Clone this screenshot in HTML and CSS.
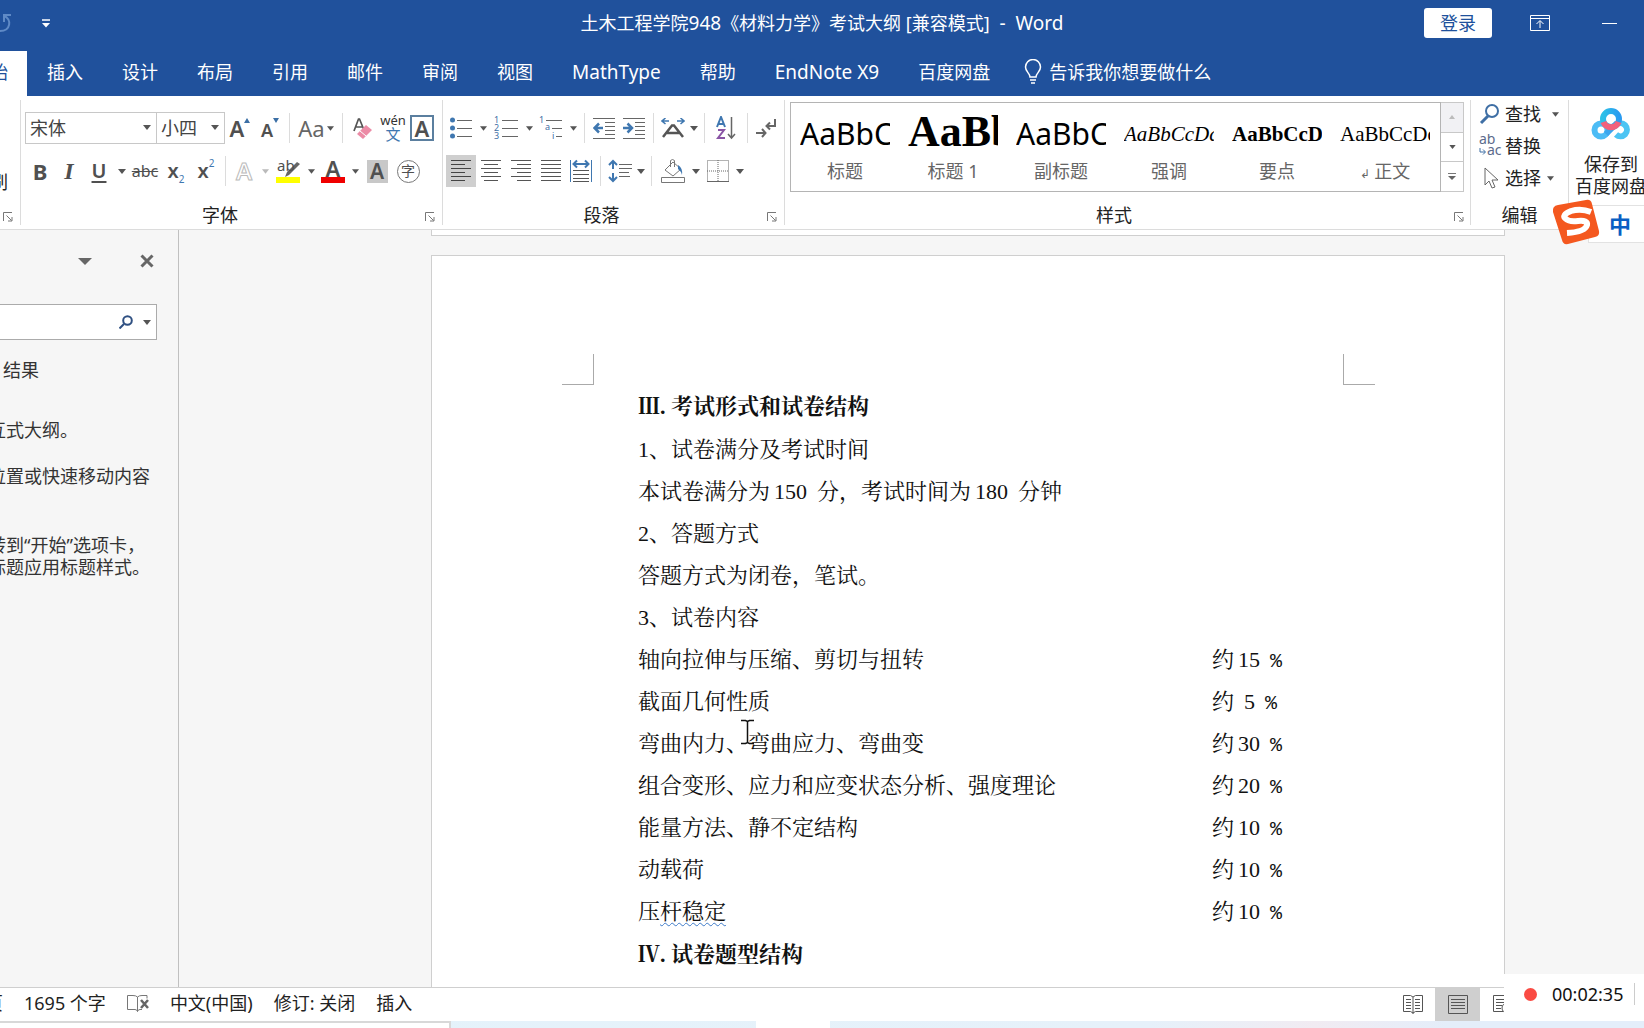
FILE: index.html
```html
<!DOCTYPE html>
<html lang="zh-CN">
<head>
<meta charset="utf-8">
<title>土木工程学院948《材料力学》考试大纲 - Word</title>
<link rel="stylesheet" href="styles.css">
</head>
<body>
<svg class="defs" aria-hidden="true">
  <symbol id="caret" viewBox="0 0 8 5"><path d="M0 0h8L4 5z" fill="#555"/></symbol>
  <symbol id="launcher" viewBox="0 0 10 10"><path d="M.5 9V.5H9M3.500 3.500l5 5M9 5v4H5" fill="none" stroke="#777"/></symbol>
</svg>
<div class="app">
  <header class="titlebar">
    <div class="quick">
      <button class="bare undo" aria-label="撤消"><svg width="12" height="22" viewBox="0 0 12 22"><path d="M3 3h8M4 3v7M4 4c8 3 7 15-4 15" fill="none" stroke="#5f8ac6" stroke-width="2"/></svg></button>
      <button class="bare" aria-label="自定义快速访问工具栏"><svg width="8" height="9" viewBox="0 0 8 9"><path d="M0 1h8" stroke="#fff" stroke-width="1.500"/><path d="M0 4h8L4 8.500z" fill="#fff"/></svg></button>
    </div>
    <h1 class="title">土木工程学院<span class="latin">948</span>《材料力学》考试大纲 [兼容模式]<span class="latin">&nbsp; -&nbsp; Word</span></h1>
    <div class="window-tools">
      <button class="login">登录</button>
      <button class="bare" aria-label="功能区显示选项"><svg width="20" height="17" viewBox="0 0 20 17"><path d="M.5.500h19v15H.500zM.5 3.500h19M10 13V6M6.500 9L10 5.500 13.500 9" fill="none" stroke="#fff"/></svg></button>
      <button class="bare minimise" aria-label="最小化"><svg width="15" height="3" viewBox="0 0 15 3"><path d="M0 1.500h15" stroke="#fff"/></svg></button>
    </div>
  </header>
  <nav class="tabs">
    <a href="#" class="tab tab-current">开始</a>
    <a href="#" class="tab">插入</a>
    <a href="#" class="tab">设计</a>
    <a href="#" class="tab">布局</a>
    <a href="#" class="tab">引用</a>
    <a href="#" class="tab">邮件</a>
    <a href="#" class="tab">审阅</a>
    <a href="#" class="tab">视图</a>
    <a href="#" class="tab latin">MathType</a>
    <a href="#" class="tab">帮助</a>
    <a href="#" class="tab latin">EndNote X9</a>
    <a href="#" class="tab">百度网盘</a>
    <a href="#" class="tab tell-me"><svg width="18" height="26" viewBox="0 0 18 26"><path d="M6 18c0-4-4.500-5-4.500-10a7.500 7.500 0 0 1 15 0c0 5-4.500 6-4.500 10zM6 21h6M7 24h4" fill="none" stroke="#fff" stroke-width="1.500"/></svg>告诉我你想要做什么</a>
  </nav>

  <section class="ribbon">
    <div class="group clipboard">
      <div class="clip-body"><button class="cut-left">刷</button></div>
      <div class="group-foot"><span></span><button class="bare" aria-label="剪贴板设置"><svg width="10" height="10"><use href="#launcher"/></svg></button></div>
    </div>

    <div class="group font-group">
      <div class="row">
        <label class="combo combo-font"><select aria-label="字体"><option>宋体</option></select><svg width="8" height="5"><use href="#caret"/></svg></label>
        <label class="combo combo-size"><select aria-label="字号"><option>小四</option></select><svg width="8" height="5"><use href="#caret"/></svg></label>
        <button class="tool w30 glyph grow" aria-label="增大字号">A<svg width="6" height="5" viewBox="0 0 6 5"><path d="M0 5h6L3 0z" fill="#3b6fa5"/></svg></button>
        <button class="tool w30 glyph shrink" aria-label="减小字号">A<svg width="6" height="5" viewBox="0 0 6 5"><path d="M0 0h6L3 5z" fill="#3b6fa5"/></svg></button>
        <i class="sep"></i>
        <button class="tool w44 case">Aa<svg width="7" height="5"><use href="#caret"/></svg></button>
        <i class="sep"></i>
        <button class="tool w32" aria-label="清除格式"><svg width="20" height="24" viewBox="0 0 20 24"><path d="M1 15L5.500 3h1L11 14M3 11h6" fill="none" stroke="#555" stroke-width="1.700"/><path d="M4 18l9-9 6 5-9 9z" fill="#ec8ba6"/><path d="M7 15l6 5" stroke="#fff"/></svg></button>
        <button class="tool w28 pinyin"><span>wén</span><b>文</b></button>
        <button class="tool w30"><span class="boxed">A</span></button>
      </div>
      <div class="row">
        <button class="tool w30 bold">B</button>
        <button class="tool w28 italic">I</button>
        <button class="tool w32 under">U</button>
        <button class="tool w14" aria-label="下划线样式"><svg width="8" height="5"><use href="#caret"/></svg></button>
        <button class="tool w32 strike">abc</button>
        <button class="tool w30 script">x<sub>2</sub></button>
        <button class="tool w30 script">x<sup>2</sup></button>
        <i class="sep"></i>
        <button class="tool w28 hollow">A</button>
        <button class="tool w14 faded" aria-label="文本效果"><svg width="7" height="5"><use href="#caret"/></svg></button>
        <button class="tool w32 marker"><span>ab</span><svg width="24" height="24" viewBox="0 0 24 24"><path d="M21 3l3 2-11 11-4 2 2-5z" fill="#666"/><path d="M0 18h24v6H0z" fill="#ff0"/></svg></button>
        <button class="tool w14" aria-label="突出显示颜色"><svg width="7" height="5"><use href="#caret"/></svg></button>
        <button class="tool w30"><span class="ink">A</span></button>
        <button class="tool w14" aria-label="字体颜色"><svg width="7" height="5"><use href="#caret"/></svg></button>
        <button class="tool w30"><span class="shade">A</span></button>
        <button class="tool w32"><span class="ring">字</span></button>
      </div>
      <div class="group-foot"><span>字体</span><button class="bare" aria-label="字体设置"><svg width="10" height="10"><use href="#launcher"/></svg></button></div>
    </div>

    <div class="group para-group">
      <div class="row">
        <button class="tool w30" aria-label="项目符号"><svg width="22" height="22" viewBox="0 0 22 22"><g fill="#3f77b0"><circle cx="2.500" cy="3" r="2.500"/><circle cx="2.500" cy="11" r="2.500"/><circle cx="2.500" cy="19" r="2.500"/></g><path d="M7 3.500h15M7 11.500h15M7 19.500h15" stroke="#666"/></svg></button>
        <button class="tool w14" aria-label="项目符号库"><svg width="7" height="5"><use href="#caret"/></svg></button>
        <button class="tool w32" aria-label="编号"><svg width="24" height="24" viewBox="0 0 24 24"><g class="tiny"><text x="0" y="7">1</text><text x="0" y="15">2</text><text x="0" y="23">3</text></g><path d="M8 4.500h16M8 12.500h16M8 20.500h16" stroke="#666"/></svg></button>
        <button class="tool w14" aria-label="编号库"><svg width="7" height="5"><use href="#caret"/></svg></button>
        <button class="tool w30" aria-label="多级列表"><svg width="24" height="24" viewBox="0 0 24 24"><g class="tiny"><text x="0" y="7">1</text><text x="6" y="14">a</text><text x="13" y="23">i</text></g><path d="M7 4.500h16M13 12.500h10M17 20.500h6" stroke="#666"/></svg></button>
        <button class="tool w14" aria-label="列表库"><svg width="7" height="5"><use href="#caret"/></svg></button>
        <i class="sep"></i>
        <button class="tool w30" aria-label="减少缩进量"><svg width="22" height="22" viewBox="0 0 22 22"><path d="M0 1.500h22M12 5.500h10M12 9.500h10M12 13.500h10M12 17.500h10M0 21.500h22" stroke="#666"/><path d="M10 11H2M6 6.500L1.500 11 6 15.500" fill="none" stroke="#3f77b0" stroke-width="2.500"/></svg></button>
        <button class="tool w30" aria-label="增加缩进量"><svg width="22" height="22" viewBox="0 0 22 22"><path d="M0 1.500h22M12 5.500h10M12 9.500h10M12 13.500h10M12 17.500h10M0 21.500h22" stroke="#666"/><path d="M0 11h8M4.500 6.500L9 11l-4.500 4.500" fill="none" stroke="#3f77b0" stroke-width="2.500"/></svg></button>
        <i class="sep"></i>
        <button class="tool w30" aria-label="中文版式"><svg width="24" height="20" viewBox="0 0 24 20"><path d="M2 19L11 7.500h2L22 19M6 15h12" fill="none" stroke="#555" stroke-width="2.500"/><path d="M8 3H2M4.500 0L1 3l3.500 3M16 3h6M19.500 0L23 3l-3.500 3" fill="none" stroke="#3f77b0" stroke-width="1.500"/></svg></button>
        <button class="tool w12" aria-label="版式选项"><svg width="8" height="5"><use href="#caret"/></svg></button>
        <i class="sep"></i>
        <button class="tool w34" aria-label="排序"><svg width="20" height="24" viewBox="0 0 20 24"><path d="M1 11L5 1l4 10M2.500 8h5" fill="none" stroke="#3f77b0" stroke-width="2"/><path d="M2 14h6L2 22h7" fill="none" stroke="#8a55a5" stroke-width="2"/><path d="M15.500 1v21M12 18l3.500 4 3.500-4" fill="none" stroke="#666" stroke-width="1.500"/></svg></button>
        <i class="sep"></i>
        <button class="tool w28" aria-label="显示编辑标记"><svg width="20" height="20" viewBox="0 0 20 20"><path d="M19 1v7h-8M14 4.500L10.500 8l3.500 3.500M0 15h9M6 11l3.500 4L6 19" fill="none" stroke="#666" stroke-width="2"/></svg></button>
      </div>
      <div class="row">
        <button class="tool w30 pressed" aria-label="左对齐"><svg width="20" height="22" viewBox="0 0 20 22"><path d="M0 .5h20M0 4.500h14M0 8.500h20M0 12.500h14M0 16.500h20M0 20.500h14" stroke="#444"/></svg></button>
        <button class="tool w30" aria-label="居中"><svg width="20" height="22" viewBox="0 0 20 22"><path d="M0 .5h20M3 4.500h14M0 8.500h20M3 12.500h14M0 16.500h20M3 20.500h14" stroke="#555"/></svg></button>
        <button class="tool w30" aria-label="右对齐"><svg width="20" height="22" viewBox="0 0 20 22"><path d="M0 .5h20M6 4.500h14M0 8.500h20M6 12.500h14M0 16.500h20M6 20.500h14" stroke="#555"/></svg></button>
        <button class="tool w30" aria-label="两端对齐"><svg width="20" height="22" viewBox="0 0 20 22"><path d="M0 .5h20M0 4.500h20M0 8.500h20M0 12.500h20M0 16.500h20M0 20.500h20" stroke="#555"/></svg></button>
        <button class="tool w30" aria-label="分散对齐"><svg width="22" height="24" viewBox="0 0 22 24"><path d="M.5 1v22M21.500 1v22" stroke="#3f77b0"/><path d="M3 11.500h16M3 15.500h16M3 19.500h16M3 22.500h16" stroke="#555"/><path d="M4 5h14M7 1.500L3.500 5 7 8.500M15 1.500L18.500 5 15 8.500" fill="none" stroke="#3f77b0" stroke-width="2"/></svg></button>
        <i class="sep"></i>
        <button class="tool w30" aria-label="行距"><svg width="24" height="24" viewBox="0 0 24 24"><path d="M11 5.500h13M11 9.500h13M11 13.500h10M11 17.500h11" stroke="#666"/><path d="M5 2v8M1 6l4-4 4 4M5 14v8M1 18l4 4 4-4" fill="none" stroke="#3f77b0" stroke-width="2"/></svg></button>
        <button class="tool w12" aria-label="行距选项"><svg width="8" height="5"><use href="#caret"/></svg></button>
        <i class="sep"></i>
        <button class="tool w34" aria-label="底纹"><svg width="24" height="24" viewBox="0 0 24 24"><path d="M.5 18.500h23v5H.500zM4 11l8-8 8 7-8 7zM9.500 8V1.500q2-2 4 0V8" fill="none" stroke="#777"/><path d="M17 6q5 3 4 10-1-4-4-6z" fill="#3f77b0"/></svg></button>
        <button class="tool w12" aria-label="底纹颜色"><svg width="8" height="5"><use href="#caret"/></svg></button>
        <button class="tool w32" aria-label="边框"><svg width="22" height="22" viewBox="0 0 22 22"><path d="M.5.500h21v21H.500zM11 0v22M0 11h22" fill="none" stroke="#666" stroke-dasharray="1 1"/><path d="M0 21.500h22" stroke="#666"/></svg></button>
        <button class="tool w12" aria-label="边框选项"><svg width="8" height="5"><use href="#caret"/></svg></button>
      </div>
      <div class="group-foot"><span>段落</span><button class="bare" aria-label="段落设置"><svg width="10" height="10"><use href="#launcher"/></svg></button></div>
    </div>

    <div class="group style-group">
      <div class="gallery">
        <div class="gallery-items">
          <button class="style"><span class="sample s-title">AaBbC</span><span>标题</span></button>
          <button class="style"><span class="sample s-head">AaBb</span><span>标题 1</span></button>
          <button class="style"><span class="sample s-title">AaBbC</span><span>副标题</span></button>
          <button class="style"><span class="sample s-serif s-em">AaBbCcDd</span><span>强调</span></button>
          <button class="style"><span class="sample s-serif s-strong">AaBbCcD</span><span>要点</span></button>
          <button class="style"><span class="sample s-serif">AaBbCcDd</span><span><small>↲</small> 正文</span></button>
        </div>
        <div class="gallery-nav">
          <button class="off" aria-label="上一行"><svg width="6" height="4" viewBox="0 0 6 4"><path d="M0 4h6L3 0z" fill="#bbb"/></svg></button>
          <button aria-label="下一行"><svg width="7" height="4"><use href="#caret"/></svg></button>
          <button aria-label="更多样式"><svg width="8" height="7" viewBox="0 0 8 7"><path d="M0 .5h8" stroke="#777"/><path d="M0 3h8L4 7z" fill="#666"/></svg></button>
        </div>
      </div>
      <div class="group-foot"><span>样式</span><button class="bare" aria-label="样式窗格"><svg width="10" height="10"><use href="#launcher"/></svg></button></div>
    </div>

    <div class="group edit-group">
      <div class="edit-body">
        <button class="edit"><svg width="24" height="22" viewBox="0 0 24 22"><circle cx="13" cy="8" r="6" fill="none" stroke="#3f6fa5" stroke-width="2"/><path d="M9 13l-7 7" stroke="#3f6fa5" stroke-width="3"/></svg>查找<svg class="end far" width="7" height="5"><use href="#caret"/></svg></button>
        <button class="edit"><svg width="24" height="24" viewBox="0 0 24 24"><g class="swap"><text x="0" y="10">ab</text><text x="8" y="21">ac</text></g><path d="M1 14v4h5M4 15.500L6.500 18 4 20.500" fill="none" stroke="#3f6fa5"/></svg>替换</button>
        <button class="edit"><svg width="24" height="24" viewBox="0 0 24 24"><path d="M6 2v17l4-4 3 7 3-1-3-7h6z" fill="#fff" stroke="#666"/></svg>选择<svg class="end" width="7" height="5"><use href="#caret"/></svg></button>
      </div>
      <div class="group-foot"><span>编辑</span></div>
    </div>

    <button class="baidu">
      <svg width="40" height="32" viewBox="0 0 40 32"><defs><linearGradient id="bd" x1="0" x2="1"><stop offset="0" stop-color="#2bc0e8"/><stop offset="1" stop-color="#2a9bf0"/></linearGradient></defs><g fill="none" stroke-width="6"><circle cx="10" cy="22" r="6.500" stroke="#4cbcf5"/><path d="M25 17a6.500 6.500 0 1 1 0 9.500" stroke="#4cc4f3"/><path d="M15 26L26 15" stroke="#3aa6ee"/><circle cx="20" cy="11" r="8" stroke="url(#bd)"/><path d="M12.500 14a8 8 0 0 0 15 0" stroke="#f2607c"/></g></svg>
      <span>保存到</span><span>百度网盘</span>
    </button>
  </section>

  <main class="workspace">
    <aside class="nav-pane">
      <div class="nav-head">
        <button class="bare" aria-label="窗格选项"><svg width="14" height="7" viewBox="0 0 14 7"><path d="M0 0h14L7 7z" fill="#666"/></svg></button>
        <button class="bare" aria-label="关闭"><svg width="14" height="14" viewBox="0 0 14 14"><path d="M1.500 1.500l11 11M12.500 1.500l-11 11" stroke="#666" stroke-width="3"/></svg></button>
      </div>
      <div class="search">
        <input type="text" aria-label="搜索文档">
        <svg width="14" height="14" viewBox="0 0 14 14"><circle cx="8.500" cy="5.500" r="4.300" fill="none" stroke="#2f5082" stroke-width="2"/><path d="M5 9l-4.500 4.500" stroke="#2f5082" stroke-width="2"/></svg>
        <svg width="8" height="5"><use href="#caret"/></svg>
      </div>
      <a href="#" class="results">结果</a>
      <div class="hints">
        <p>互式大纲。</p>
        <p>位置或快速移动内容</p>
        <p class="hint-last">转到“开始”选项卡，<br>标题应用标题样式。</p>
      </div>
    </aside>

    <div class="canvas">
      <div class="sheet-prev"></div>
      <article class="sheet">
        <div class="crops"><i class="crop crop-l"></i><i class="crop crop-r"></i></div>
        <div class="text">
          <h2>Ⅲ. 考试形式和试卷结构</h2>
          <p>1、试卷满分及考试时间</p>
          <p>本试卷满分为<span class="num">150</span>分，考试时间为<span class="num">180</span>分钟</p>
          <p>2、答题方式</p>
          <p>答题方式为闭卷，笔试。</p>
          <p>3、试卷内容</p>
          <table>
            <tr><td>轴向拉伸与压缩、剪切与扭转</td><td>约<span class="num">15</span><span class="pct">%</span></td></tr>
            <tr><td>截面几何性质</td><td>约<span class="num one">5</span><span class="pct">%</span></td></tr>
            <tr><td>弯曲内力、弯曲应力、弯曲变</td><td>约<span class="num">30</span><span class="pct">%</span></td></tr>
            <tr><td>组合变形、应力和应变状态分析、强度理论</td><td>约<span class="num">20</span><span class="pct">%</span></td></tr>
            <tr><td>能量方法、静不定结构</td><td>约<span class="num">10</span><span class="pct">%</span></td></tr>
            <tr><td>动载荷</td><td>约<span class="num">10</span><span class="pct">%</span></td></tr>
            <tr><td>压<span class="typo">杆稳定</span></td><td>约<span class="num">10</span><span class="pct">%</span></td></tr>
          </table>
          <h2>Ⅳ. 试卷题型结构</h2>
        </div>
        <svg class="ibeam" width="13" height="26" viewBox="0 0 13 26"><path d="M0 1.500h4.500l2 1 2-1H13M0 24.500h4.500l2-1 2 1H13M6.500 2v22" fill="none" stroke="#111" stroke-width="1.500"/></svg>
      </article>
    </div>
  </main>

  <footer class="status">
    <span class="cut-page">页</span>
    <span class="words">1695 个字</span>
    <svg class="proof" width="22" height="19" viewBox="0 0 22 19"><path d="M10.500 17.500V3Q9 1.500 6 1.500H.500v14H8q2 0 2.500 2 .5-2 2.500-2h2M10.500 3Q12 1.500 15 1.500h5v3" fill="none" stroke="#777"/><path d="M14 6l7 8M21 6l-7 8" stroke="#666" stroke-width="2.500"/></svg>
    <span>中文(中国)</span>
    <span>修订: 关闭</span>
    <span>插入</span>
    <div class="views">
      <button aria-label="阅读视图"><svg width="20" height="19" viewBox="0 0 20 19"><path d="M10 2v17M.5.500h7L10 2l2.500-1.500h7v16h-7L10 18l-2.500-1.500h-7zM3 4.500h5M3 7.500h5M3 10.500h5M3 13.500h5M12 4.500h5M12 7.500h5M12 10.500h5M12 13.500h5" fill="none" stroke="#555"/></svg></button>
      <button class="pressed" aria-label="页面视图"><svg width="20" height="19" viewBox="0 0 20 19"><path d="M.5.500h19v18H.500zM3 4.500h14M3 7.500h14M3 10.500h14M3 13.500h14" fill="none" stroke="#555"/></svg></button>
      <button class="web" aria-label="Web 版式视图"><svg width="20" height="19" viewBox="0 0 20 19"><path d="M10 16.500H.500V.500h19v8M3 4.500h14M3 7.500h8M3 10.500h6M3 13.500h5" fill="none" stroke="#555"/><circle cx="14" cy="13" r="5" fill="none" stroke="#555"/></svg></button>
    </div>
  </footer>
  <div class="taskbar"><i class="task-a"></i><i class="task-b"></i></div>
</div>

<div class="ime">
  <span>中</span>
  <svg width="48" height="46" viewBox="0 0 48 46"><path d="M6 6L34 1q5-1 6 4l7 27q1 5-4 6l-27 7q-5 1-6-4L1 13q-1-6 5-7z" fill="#f4581f"/><path d="M39 13Q29 9 19 12q-10 4-5 8 3 3 12 2 10-1 9 4-2 7-20 8" fill="none" stroke="#fff" stroke-width="6"/></svg>
</div>
<div class="recorder"><i></i><span>00:02:35</span></div>
</body>
</html>
```
FILE: styles.css
```css
* { box-sizing: border-box; }
body {
  margin: 0;
  height: 100vh;
  overflow: hidden;
  font: 18px/22px "Noto Sans", "Noto Sans CJK SC", sans-serif;
  color: #333;
  background: #f6f6f6;
}
button, select, input { font: inherit; color: inherit; }
button { border: 0; padding: 0; background: none; }
a { color: inherit; text-decoration: none; }
svg { display: block; flex: none; }
.defs { position: absolute; width: 0; height: 0; }
.bare { display: block; }
.latin { font-size: 19px; }
.app { display: flex; flex-direction: column; height: 100%; }

.titlebar {
  display: grid;
  grid-template-columns: 1fr auto 1fr;
  align-items: center;
  height: 46px;
  background: #20519c;
  color: #fff;
}
.quick { display: flex; align-items: center; gap: 30px; }
.title { margin: 0; font-size: 18px; font-weight: 400; }
.window-tools { display: flex; align-items: center; justify-content: flex-end; }
.login {
  width: 68px;
  height: 30px;
  margin-right: 38px;
  border-radius: 3px;
  background: #fff;
  color: #20519c;
}
.minimise { margin: 0 27px 0 52px; }

.tabs { display: flex; gap: 1px; padding-top: 5px; background: #20519c; color: #fff; }
.tab { padding: 10px 19px 13px; white-space: nowrap; }
.tab-current {
  display: flex;
  justify-content: flex-end;
  width: 27px;
  padding-left: 0;
  overflow: hidden;
  background: #fff;
  color: #20519c;
}
.tell-me { display: flex; align-items: center; gap: 7px; padding-left: 14px; }
.tell-me svg { margin: -2px 0; }

.ribbon { display: flex; padding-top: 4px; background: #fff; border-bottom: 1px solid #dcdcdc; overflow: hidden; }
.group { display: flex; flex-direction: column; flex: none; margin-bottom: 4px; border-right: 1px solid #dcdcdc; }
.group-foot { display: flex; align-items: center; margin-top: auto; padding: 7px 7px 0 0; height: 27px; color: #222; }
.group-foot span { flex: 1; padding-right: 10px; text-align: center; }
.group-foot .bare { margin-top: 4px; }
.clipboard { width: 21px; }
.clipboard .group-foot span { padding: 0; }
.clip-body { display: flex; justify-content: flex-end; padding: 71px 12px 0 0; color: #222; }
.font-group { width: 422px; padding: 12px 0 0 4px; }
.para-group { width: 342px; padding: 12px 0 0 3px; }
.row { display: flex; align-items: center; height: 32px; margin-bottom: 11px; }
.sep { width: 1px; height: 30px; margin: 0 4px; background: #dcdcdc; }

.tool { display: flex; align-items: center; justify-content: center; flex: none; height: 32px; color: #505050; }
.w12 { width: 12px; }
.w14 { width: 14px; }
.w28 { width: 28px; }
.w30 { width: 30px; }
.w32 { width: 32px; }
.w34 { width: 34px; }
.w44 { width: 44px; }
.pressed { background: #cfcfcf; }
.faded { opacity: .4; }

.combo { position: relative; height: 32px; border: 1px solid #c8c8c8; }
.combo + .combo { border-left: 0; }
.combo select { width: 100%; height: 100%; padding: 0 4px; border: 0; appearance: none; background: none; color: #444; }
.combo svg { position: absolute; right: 5px; top: 12px; }
.combo-font { width: 132px; }
.combo-size { width: 68px; }

.glyph { font-weight: 600; font-size: 22px; }
.glyph svg { align-self: flex-start; margin-top: 6px; }
.shrink { font-size: 18px; padding-top: 4px; }
.shrink svg { margin-top: 2px; }
.case { font-size: 22px; gap: 2px; color: #666; }
.pinyin { flex-direction: column; font-size: 13px; line-height: 12px; color: #333; }
.pinyin b { font-size: 15px; line-height: 16px; font-weight: 400; color: #3f77b0; }
.boxed { width: 24px; height: 26px; border: 2px solid #5b7f9f; font-size: 22px; font-weight: 600; line-height: 22px; }
.bold { font-size: 22px; font-weight: 700; }
.italic { font: italic 700 24px/30px "Liberation Serif", serif; }
.under { font-size: 20px; font-weight: 600; text-decoration: underline; text-underline-offset: 3px; }
.strike { text-decoration: line-through; font-size: 16px; }
.script { font-size: 20px; font-weight: 600; }
.script sub, .script sup { font-size: 10px; line-height: 10px; font-weight: 400; color: #3f77b0; }
.script sub { align-self: flex-end; margin-bottom: 3px; }
.script sup { align-self: flex-start; margin-top: 3px; }
.hollow { font-size: 24px; font-weight: 600; color: #fff; -webkit-text-stroke: 1px #bbb; }
.marker { position: relative; }
.marker span { position: absolute; left: 5px; top: -1px; font-size: 15px; }
.ink { width: 24px; height: 24px; border-bottom: 6px solid #f00000; font-size: 22px; line-height: 18px; font-weight: 600; }
.shade { width: 21px; height: 23px; background: #c8c8c8; font-size: 21px; font-weight: 600; line-height: 23px; }
.ring { width: 23px; height: 23px; border: 1px solid #777; border-radius: 50%; font-size: 14px; line-height: 20px; }
.tiny { font-size: 9px; fill: #3f6fa5; }
.swap { font-size: 14px; fill: #5c6b8c; }

.style-group { flex: 1; min-width: 0; padding: 2px 6px 0 5px; }
.style-group .group-foot { padding-right: 0; }
.style-group .group-foot span { padding-right: 16px; }
.gallery { display: flex; height: 90px; }
.gallery-items { display: flex; flex: 1; min-width: 0; overflow: hidden; border: 1px solid #b4b4b4; }
.style { display: flex; flex: none; flex-direction: column; width: 108px; padding: 3px 9px 0; color: #666; white-space: nowrap; }
.style > span { display: block; width: 100%; }
.style small { font-size: 12px; }
.style .sample { flex: none; height: 54px; overflow: hidden; color: #000; text-align: left; }
.s-title { font-size: 30px; line-height: 56px; }
.s-head { font: 700 44px/52px "Liberation Serif", serif; }
.s-serif { font: 21px/56px "Liberation Serif", serif; }
.s-em { font-style: italic; }
.s-strong { font-weight: 700; }
.gallery-nav { display: flex; flex-direction: column; width: 23px; border: 1px solid #c8c8c8; border-left: 0; }
.gallery-nav button { display: flex; flex: 1; align-items: center; justify-content: center; }
.gallery-nav button + button { border-top: 1px solid #c8c8c8; }
.off { background: #f1f1f4; }

.edit-group { width: 98px; color: #222; }
.edit-group .group-foot, .edit-group .group-foot span { padding-right: 0; }
.edit { display: flex; align-items: center; gap: 2px; height: 32px; padding-left: 8px; }
.edit .end { margin-left: 4px; }
.edit .far { margin-left: 9px; }
.edit-body { margin-top: -2px; }
.baidu { display: flex; flex: none; flex-direction: column; align-items: center; align-self: flex-start; width: 84px; margin-right: -9px; padding-top: 8px; color: #222; }
.baidu svg { margin-bottom: 13px; }

.workspace { display: flex; flex: 1; min-height: 0; }
.nav-pane { width: 179px; border-right: 1px solid #c0c0c0; overflow: hidden; white-space: nowrap; }
.nav-head { display: flex; align-items: center; justify-content: flex-end; gap: 48px; padding: 24px 24px 0 0; }
.search { display: flex; align-items: center; gap: 10px; height: 36px; margin: 36px 21px 0 0; padding-right: 5px; border: 1px solid #ababab; border-left: 0; background: #fff; }
.search input { flex: 1; min-width: 0; border: 0; background: none; }
.results { display: block; padding: 19px 0 0 3px; }
.hints { margin: 38px 0 0 -12px; }
.hints p { margin: 0 0 24px; }
.hints .hint-last { margin-top: 47px; }

.canvas { flex: 1; min-width: 0; padding: 0 139px 0 252px; overflow: hidden; }
.sheet-prev { height: 6px; border: 1px solid #cfcfcf; border-top: 0; background: #fff; }
.sheet { position: relative; height: 900px; margin-top: 19px; padding: 98px 129px 0 130px; border: 1px solid #cfcfcf; background: #fff; }
.crops { display: flex; justify-content: space-between; }
.crop { width: 32px; height: 31px; border-bottom: 1px solid #aaa; }
.crop-l { border-right: 1px solid #aaa; }
.crop-r { border-left: 1px solid #aaa; }
.text { padding-left: 76px; font: 22px/42px "Liberation Serif", "Noto Serif CJK SC", "Noto Sans CJK SC", serif; color: #111; white-space: nowrap; }
.text h2 { margin: 0; font-size: 22px; line-height: 44px; }
.text p { margin: 0; }
.num { margin: 0 10px 0 4px; }
.one { margin-left: 10px; }
.pct { font-family: "Liberation Mono", monospace; font-size: 20px; line-height: 20px; }
table { width: 100%; border-spacing: 0; }
td { padding: 0; }
td:last-child { width: 163px; }
.typo { text-decoration: underline wavy #3d7ac8 1px; text-underline-offset: 3px; }
.ibeam { position: absolute; left: 309px; top: 463px; }

.status { display: flex; align-items: center; gap: 21px; height: 34px; border-top: 1px solid #cfcfcf; background: #fff; color: #222; }
.status > span, .proof { margin-bottom: 3px; }
.cut-page { display: flex; justify-content: flex-end; width: 3px; overflow: hidden; }
.views { display: flex; align-self: stretch; margin: 0 119px 0 auto; }
.views button { display: flex; align-items: center; justify-content: center; width: 45px; }
.taskbar { display: flex; height: 7px; background: linear-gradient(90deg, #e4f3fb, #e6f1fa 70%, #f1ebf2 80%, #e4eefa 88%); }
.task-a { width: 451px; margin-right: 305px; border-top: 2px solid #d8d8d8; border-right: 2px solid #d8d8d8; background: #fff; }
.task-b { width: 74px; background: #fff; }

.ime { position: absolute; right: 0; top: 199px; width: 92px; height: 46px; }
.ime svg { position: absolute; left: 0; top: 0; }
.ime span { display: block; margin: 6px 0 0 36px; padding-left: 20px; border: 1px solid #e2e2e2; border-right: 0; background: #fff; color: #0a5fc4; font-size: 22px; font-weight: 700; line-height: 36px; }
.recorder { position: absolute; right: 0; bottom: 8px; display: flex; align-items: center; gap: 15px; width: 140px; height: 46px; padding: 0 9px 6px 20px; background: #fff; color: #111; }
.recorder i { flex: none; width: 13px; height: 13px; border-radius: 50%; background: #fa4b43; }
.recorder span { flex: 1; border-right: 1px solid #ccc; }
```
